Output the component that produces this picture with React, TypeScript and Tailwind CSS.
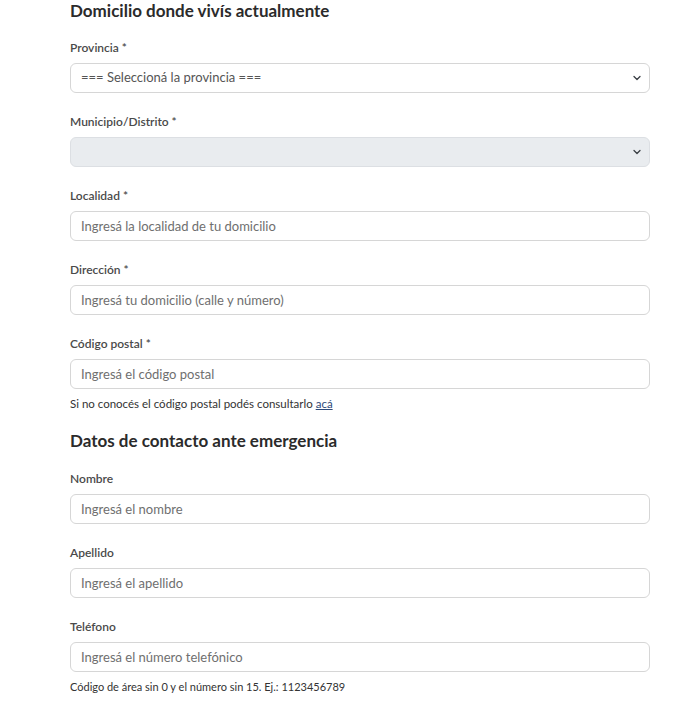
import React from 'react';

const Chevron = () => (
  <svg
    className="pointer-events-none absolute right-[9px] top-1/2 -translate-y-1/2"
    width="8"
    height="8"
    viewBox="0 0 16 16"
  >
    <path d="M2 5l6 6 6-6" fill="none" stroke="#3a3f44" strokeWidth="2.6" strokeLinecap="round" strokeLinejoin="round" />
  </svg>
);

const Label = ({ children }: { children: React.ReactNode }) => (
  <label className="mb-[7px] block h-[16px] text-[12px] leading-[16px] font-semibold text-[#4a4a4a]">{children}</label>
);

const baseCls =
  'block h-[30px] w-full rounded-[6px] border border-[#d6d6d6] px-[10px] text-[13px] text-[#333] outline-none placeholder:text-[#6f6f6f]';

const TextField = ({ label, placeholder, last }: { label: string; placeholder: string; last?: boolean }) => (
  <div className={last ? '' : 'mb-[21px]'}>
    <Label>{label}</Label>
    <input className={baseCls + ' bg-white'} placeholder={placeholder} />
  </div>
);

export default function App() {
  return (
    <div className="min-h-[709px] bg-white" style={{ fontFamily: 'Lato, "Open Sans", sans-serif' }}>
      <div className="mx-[70px] w-[580px]">
        <h2 className="mb-[18px] h-[22px] text-[17px] leading-[22px] font-bold text-[#2b2b2b]">
          Domicilio donde vivís actualmente
        </h2>

        <div className="mb-[21px]">
          <Label>Provincia *</Label>
          <div className="relative">
            <select className={baseCls + ' appearance-none bg-white text-[#555]'}>
              <option>=== Seleccioná la provincia ===</option>
            </select>
            <Chevron />
          </div>
        </div>

        <div className="mb-[21px]">
          <Label>Municipio/Distrito *</Label>
          <div className="relative">
            <select disabled className={baseCls + ' appearance-none bg-[#e9ecef] border-[#dcdfe3]'}>
              <option></option>
            </select>
            <Chevron />
          </div>
        </div>

        <TextField label="Localidad *" placeholder="Ingresá la localidad de tu domicilio" />
        <TextField label="Dirección *" placeholder="Ingresá tu domicilio (calle y número)" />
        <TextField label="Código postal *" placeholder="Ingresá el código postal" last />
        <p className="mt-[7px] h-[16px] text-[11.5px] leading-[16px] text-[#333]">
          Si no conocés el código postal podés consultarlo{' '}
          <a href="#" className="text-[#2e4a7a] underline">
            acá
          </a>
        </p>

        <h2 className="mt-[18px] mb-[19px] h-[22px] text-[17px] leading-[22px] font-bold text-[#2b2b2b]">
          Datos de contacto ante emergencia
        </h2>

        <TextField label="Nombre" placeholder="Ingresá el nombre" />
        <TextField label="Apellido" placeholder="Ingresá el apellido" />
        <TextField label="Teléfono" placeholder="Ingresá el número telefónico" last />
        <p className="mt-[7px] h-[16px] text-[11px] leading-[16px] text-[#333]">
          Código de área sin 0 y el número sin 15. Ej.: 1123456789
        </p>
      </div>
    </div>
  );
}
